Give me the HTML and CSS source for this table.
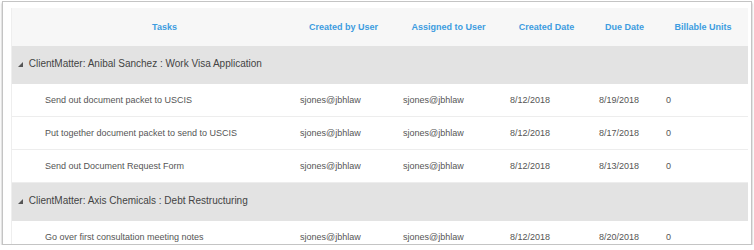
FILE: index.html
```html
<!DOCTYPE html>
<html lang="en">
<head>
    <meta charset="UTF-8">
    <meta name="viewport" content="width=device-width, initial-scale=1.0">
    <title>Tasks</title>
    <link rel="stylesheet" href="styles.css">
</head>
<body>
    <div class="frame">
        <div class="grid">
            <table class="tasks">
                <colgroup>
                    <col class="col-indent">
                    <col class="col-task">
                    <col class="col-created-by">
                    <col class="col-assigned">
                    <col class="col-created-date">
                    <col class="col-due-date">
                    <col class="col-units">
                </colgroup>
                <thead>
                    <tr>
                        <th></th>
                        <th>Tasks</th>
                        <th>Created by User</th>
                        <th>Assigned to User</th>
                        <th>Created Date</th>
                        <th>Due Date</th>
                        <th>Billable Units</th>
                    </tr>
                </thead>
                <tbody>
                    <tr class="group">
                        <td colspan="7">
                            <svg class="toggle" width="5" height="5" viewBox="0 0 5 5"><polygon points="5,0 5,5 0,5"/></svg>
                            ClientMatter: Anibal Sanchez : Work Visa Application
                        </td>
                    </tr>
                    <tr>
                        <td></td>
                        <td>Send out document packet to USCIS</td>
                        <td>sjones@jbhlaw</td>
                        <td>sjones@jbhlaw</td>
                        <td>8/12/2018</td>
                        <td>8/19/2018</td>
                        <td>0</td>
                    </tr>
                    <tr>
                        <td></td>
                        <td>Put together document packet to send to USCIS</td>
                        <td>sjones@jbhlaw</td>
                        <td>sjones@jbhlaw</td>
                        <td>8/12/2018</td>
                        <td>8/17/2018</td>
                        <td>0</td>
                    </tr>
                    <tr>
                        <td></td>
                        <td>Send out Document Request Form</td>
                        <td>sjones@jbhlaw</td>
                        <td>sjones@jbhlaw</td>
                        <td>8/12/2018</td>
                        <td>8/13/2018</td>
                        <td>0</td>
                    </tr>
                    <tr class="group">
                        <td colspan="7">
                            <svg class="toggle" width="5" height="5" viewBox="0 0 5 5"><polygon points="5,0 5,5 0,5"/></svg>
                            ClientMatter: Axis Chemicals : Debt Restructuring
                        </td>
                    </tr>
                    <tr>
                        <td></td>
                        <td>Go over first consultation meeting notes</td>
                        <td>sjones@jbhlaw</td>
                        <td>sjones@jbhlaw</td>
                        <td>8/12/2018</td>
                        <td>8/20/2018</td>
                        <td>0</td>
                    </tr>
                </tbody>
            </table>
        </div>
    </div>
</body>
</html>
```

FILE: styles.css
```css
body {
    margin: 0;
    background-color: #fff;
    font-family: "Liberation Sans", Arial, sans-serif;
}
.frame {
    box-sizing: border-box;
    margin: 1px 2px 0 2px;
    height: 244px;
    border: 1px solid #c4c4c4;
    box-shadow: 0 2px 2px rgba(0, 0, 0, 0.35);
    background-color: #fff;
    padding: 6px 3px 0 8px;
    overflow: hidden;
}
.grid {
    border-left: 1px solid #eeeeee;
}
.tasks {
    width: 100%;
    table-layout: fixed;
    border-collapse: collapse;
    font-size: 9px;
}
.col-indent { width: 25px; }
.col-task { width: 255px; }
.col-created-by { width: 103px; }
.col-assigned { width: 107px; }
.col-created-date { width: 89px; }
.col-due-date { width: 67px; }
.col-units { width: auto; }
.tasks thead th {
    height: 38px;
    padding: 0 8px;
    background-color: #f7f7f7;
    color: #3d9ce0;
    font-weight: bold;
    text-align: center;
}
.tasks td {
    height: 32px;
    padding: 0 8px;
    color: #555;
    border-bottom: 1px solid #ededed;
    white-space: nowrap;
}
.tasks tr.group td {
    height: 34px;
    padding: 0 0 4px 6px;
    background-color: #e3e3e3;
    color: #444;
    font-size: 10px;
    border-bottom: 0;
}
.toggle {
    fill: #555;
    margin-right: 3px;
    vertical-align: 0;
}
```
